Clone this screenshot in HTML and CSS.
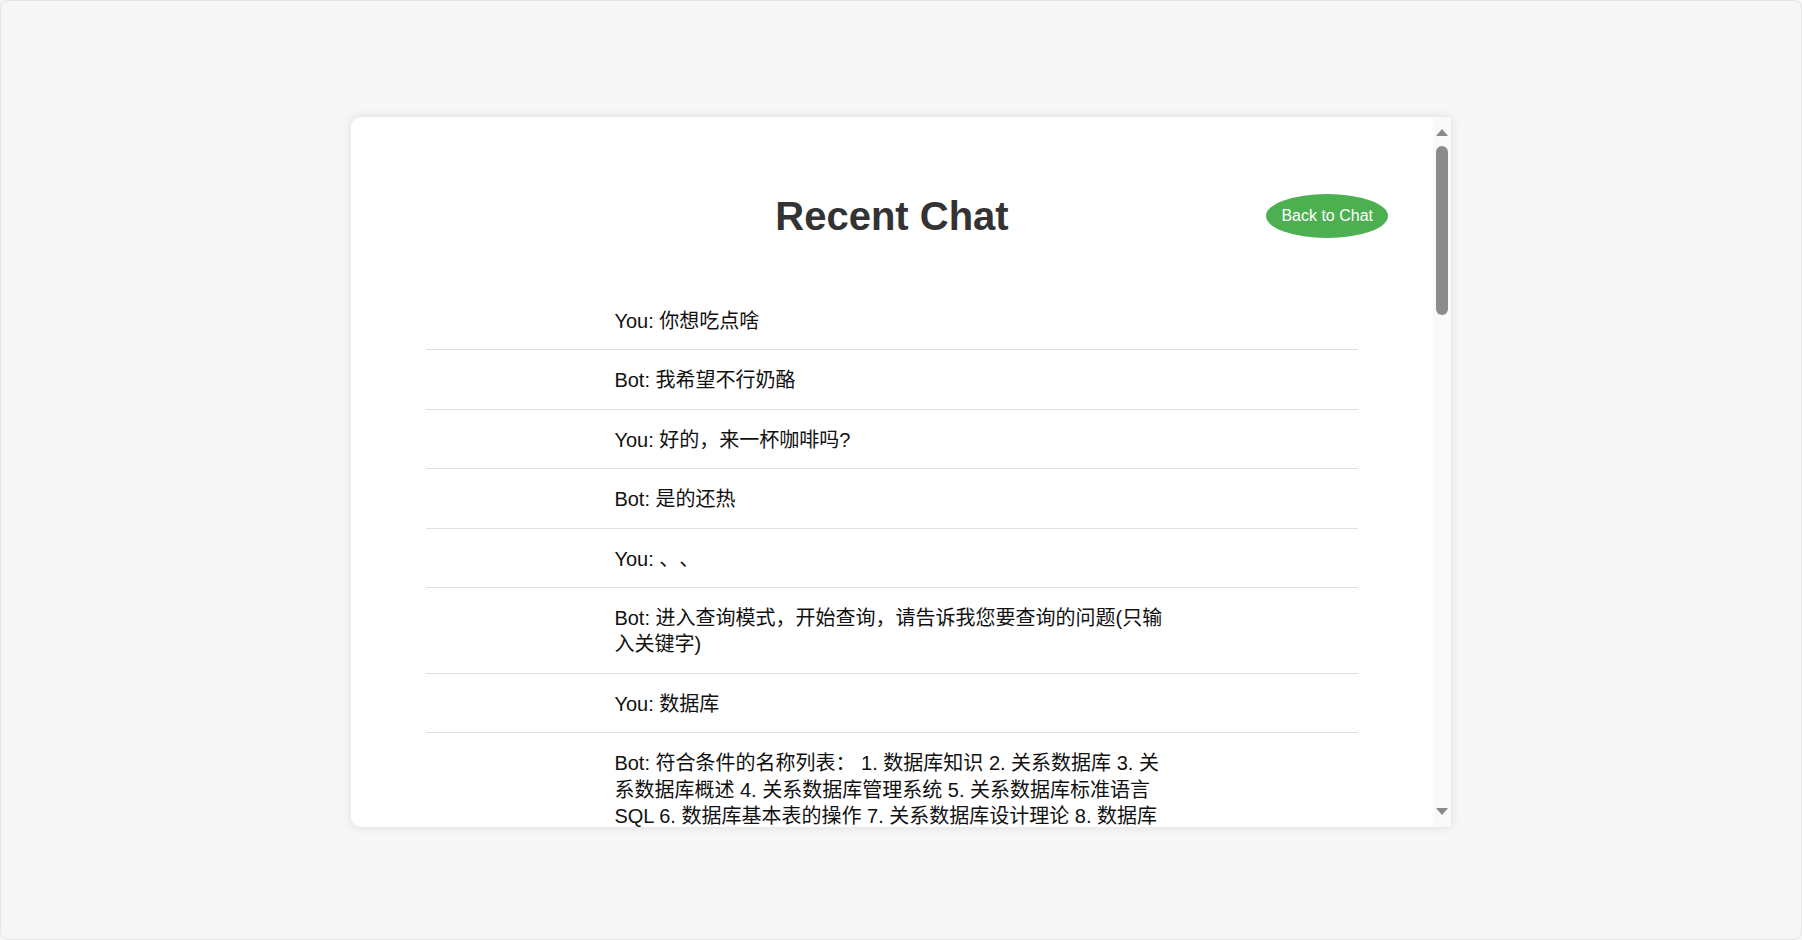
FILE: index.html
```html
<!DOCTYPE html>
<html lang="zh-CN">
<head>
<meta charset="utf-8">
<title>Recent Chat</title>
<link rel="stylesheet" href="styles.css">
</head>
<body>
<div class="frame">
  <div class="card">
    <div class="scroll-area">
      <div class="header">
        <h1 class="title">Recent Chat</h1>
        <button class="back-btn">Back to Chat</button>
      </div>
      <ul class="history">
        <li class="row"><p class="msg">You: 你想吃点啥</p></li>
        <li class="row"><p class="msg">Bot: 我希望不行奶酪</p></li>
        <li class="row"><p class="msg">You: 好的，来一杯咖啡吗?</p></li>
        <li class="row"><p class="msg">Bot: 是的还热</p></li>
        <li class="row"><p class="msg">You: 、、</p></li>
        <li class="row"><p class="msg">Bot: 进入查询模式，开始查询，请告诉我您要查询的问题(只输入关键字)</p></li>
        <li class="row"><p class="msg">You: 数据库</p></li>
        <li class="row"><p class="msg">Bot: 符合条件的名称列表： 1. 数据库知识 2. 关系数据库 3. 关系数据库概述 4. 关系数据库管理系统 5. 关系数据库标准语言 SQL 6. 数据库基本表的操作 7. 关系数据库设计理论 8. 数据库安全性 9. 数据库完整性</p></li>
      </ul>
    </div>
    <div class="scrollbar">
      <div class="sb-btn sb-up"><span class="arrow-up"></span></div>
      <div class="sb-track"><div class="sb-thumb"></div></div>
      <div class="sb-btn sb-down"><span class="arrow-down"></span></div>
    </div>
  </div>
</div>
</body>
</html>
```

FILE: styles.css
```css
* {
  box-sizing: border-box;
}

html, body {
  margin: 0;
  padding: 0;
  height: 100%;
}

body {
  background: #f6f6f6;
  font-family: "Liberation Sans", Arial, "Noto Sans CJK SC", sans-serif;
  color: #111;
}

.frame {
  height: 100vh;
  border: 1px solid #e4e4e4;
  border-radius: 8px;
  padding-top: 4px;
  display: flex;
  align-items: center;
  justify-content: center;
}

.card {
  width: 1100px;
  height: 710px;
  background: #fff;
  border-radius: 10px 0 0 10px;
  box-shadow: 0 0 10px rgba(0, 0, 0, 0.1);
  display: flex;
  overflow: hidden;
}

.scroll-area {
  flex: 1;
  min-width: 0;
  overflow: hidden;
}

.scrollbar {
  width: 18px;
  flex: none;
  background: #f9f9f9;
  display: flex;
  flex-direction: column;
}

.sb-btn {
  height: 26px;
  flex: none;
  display: flex;
  justify-content: center;
}

.sb-up {
  align-items: flex-start;
  padding-top: 12px;
}

.sb-down {
  align-items: flex-end;
  padding-bottom: 12px;
}

.arrow-up {
  width: 0;
  height: 0;
  border-left: 6px solid transparent;
  border-right: 6px solid transparent;
  border-bottom: 7px solid #8a8a8a;
}

.arrow-down {
  width: 0;
  height: 0;
  border-left: 6px solid transparent;
  border-right: 6px solid transparent;
  border-top: 7px solid #8a8a8a;
}

.sb-track {
  flex: 1;
  display: flex;
  justify-content: center;
  align-items: flex-start;
  padding-top: 3px;
}

.sb-thumb {
  width: 12px;
  height: 169px;
  background: #8b8b8b;
  border-radius: 6px;
}

.header {
  display: grid;
  grid-template-columns: 1fr auto 1fr;
  align-items: center;
  padding: 76px 45px 0;
}

.title {
  grid-column: 2;
  margin: 0;
  font-size: 40px;
  line-height: 46px;
  font-weight: bold;
  color: #333;
}

.back-btn {
  grid-column: 3;
  justify-self: end;
  border: none;
  border-radius: 50%;
  background: #4caf50;
  color: #fff;
  font-family: "Liberation Sans", Arial, sans-serif;
  font-size: 16px;
  line-height: 18px;
  padding: 13px 15px;
  cursor: pointer;
}

.history {
  list-style: none;
  margin: 52px 75px 0;
  padding: 0;
}

.row {
  padding: 17px 0 15px;
  border-bottom: 1px solid #dedede;
}

.msg {
  width: 60%;
  margin: 0 auto;
  padding-left: 2px;
  font-size: 20px;
  line-height: 26.4px;
  text-spacing-trim: space-all;
}
```
